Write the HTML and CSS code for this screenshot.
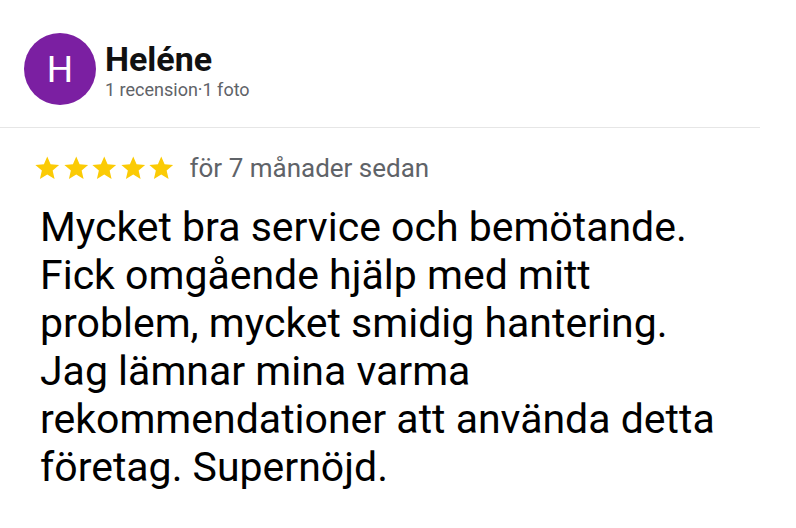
FILE: index.html
```html
<!DOCTYPE html>
<html lang="sv">
<head>
  <meta charset="UTF-8" />
  <meta name="viewport" content="width=device-width, initial-scale=1.0"/>
  <title>Recension – Heléne</title>
  <link rel="stylesheet" href="styles.css">
</head>
<body>
  <div class="review">
    <div class="reviewer">
      <div class="avatar">H</div>
      <div class="reviewer-info">
        <div class="name">Heléne</div>
        <div class="stats">1 recension·1 foto</div>
      </div>
    </div>

    <div class="meta">
      <div class="stars">
        <svg viewBox="0 0 24 24"><path d="M12 17.27L18.18 21l-1.64-7.03L22 9.24l-7.19-.61L12 2 9.19 8.63 2 9.24l5.46 4.73L5.82 21z"/></svg>
        <svg viewBox="0 0 24 24"><path d="M12 17.27L18.18 21l-1.64-7.03L22 9.24l-7.19-.61L12 2 9.19 8.63 2 9.24l5.46 4.73L5.82 21z"/></svg>
        <svg viewBox="0 0 24 24"><path d="M12 17.27L18.18 21l-1.64-7.03L22 9.24l-7.19-.61L12 2 9.19 8.63 2 9.24l5.46 4.73L5.82 21z"/></svg>
        <svg viewBox="0 0 24 24"><path d="M12 17.27L18.18 21l-1.64-7.03L22 9.24l-7.19-.61L12 2 9.19 8.63 2 9.24l5.46 4.73L5.82 21z"/></svg>
        <svg viewBox="0 0 24 24"><path d="M12 17.27L18.18 21l-1.64-7.03L22 9.24l-7.19-.61L12 2 9.19 8.63 2 9.24l5.46 4.73L5.82 21z"/></svg>
      </div>
      <span class="date">för 7 månader sedan</span>
    </div>

    <p class="text">Mycket bra service och bemötande. Fick omgående hjälp med mitt problem, mycket smidig hantering. Jag lämnar mina varma rekommendationer att använda detta företag. Supernöjd.</p>
  </div>
</body>
</html>
```

FILE: styles.css
```css
body {
  margin: 0;
  background-color: #fff;
  font-family: 'Roboto', 'Liberation Sans', sans-serif;
}

.review {
  width: 760px;
}

.reviewer {
  display: flex;
  align-items: flex-start;
  gap: 9px;
  padding: 33px 0 22px 24px;
  border-bottom: 1px solid #e6e6e6;
}

.avatar {
  width: 72px;
  height: 72px;
  border-radius: 50%;
  background-color: #7b1fa2;
  color: #fff;
  font-size: 37px;
  display: flex;
  align-items: center;
  justify-content: center;
}

.reviewer-info {
  padding-top: 7px;
}

.name {
  font-size: 34px;
  font-weight: bold;
  line-height: 38px;
  color: #111;
}

.stats {
  margin-top: 1px;
  font-size: 18px;
  line-height: 22px;
  color: #5f6368;
}

.meta {
  display: flex;
  align-items: center;
  gap: 14px;
  padding: 24px 0 0 33px;
}

.stars {
  display: flex;
}

.stars svg {
  width: 28.5px;
  height: 28.5px;
  fill: #fbcb05;
}

.date {
  font-size: 26px;
  line-height: 32px;
  color: #5f6368;
}

.text {
  margin: 19px 0 0;
  padding: 0 35px 0 40px;
  font-size: 41px;
  line-height: 48px;
  color: #000;
}
```
